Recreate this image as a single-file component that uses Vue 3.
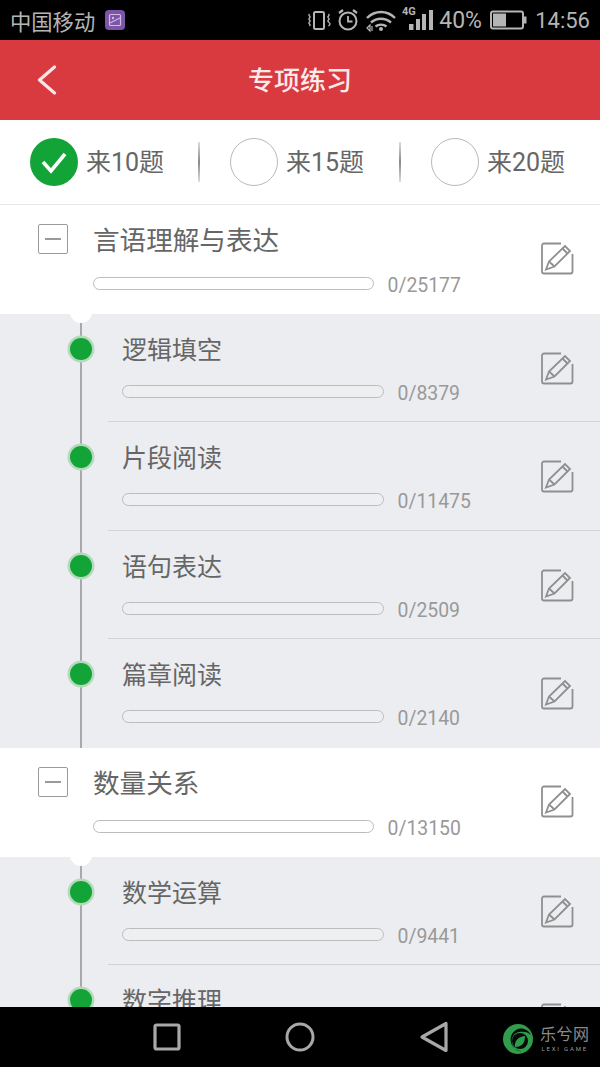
<script setup>
const options = [
  { label: '来10题', checked: true },
  { label: '来15题', checked: false },
  { label: '来20题', checked: false }
]
const sections = [
  {
    title: '言语理解与表达', bar: '0/25177',
    children: [
      { title: '逻辑填空', count: '0/8379' },
      { title: '片段阅读', count: '0/11475' },
      { title: '语句表达', count: '0/2509' },
      { title: '篇章阅读', count: '0/2140' }
    ]
  },
  {
    title: '数量关系', bar: '0/13150',
    children: [
      { title: '数学运算', count: '0/9441' },
      { title: '数字推理', count: '' }
    ]
  }
]
</script>

<template>
  <div class="page">
    <div class="status">
      <span class="carrier">中国移动</span>
      <svg class="gallery" width="20" height="20" viewBox="0 0 20 20">
        <rect width="20" height="20" rx="4" fill="#7d55a8" />
        <rect x="4.5" y="4.5" width="11" height="11" rx="1" fill="none" stroke="#cdbbe0" stroke-width="1.2" />
        <path d="M5 13l10-5" stroke="#cdbbe0" stroke-width="1.1" />
        <circle cx="8" cy="8" r="1.2" fill="#cdbbe0" />
      </svg>
      <span class="spacer"></span>
      <svg class="sys" width="132" height="40" viewBox="0 0 132 40" fill="none" stroke="#b5b5b5">
        <rect x="11" y="12" width="10" height="17" rx="1.5" stroke-width="2" />
        <path d="M6.500 14c-2 1.500 2 2.500 0 4s2 2.500 0 4s2 2.500 0 4M25.500 14c2 1.500-2 2.500 0 4s-2 2.500 0 4s2 2.500 0 4" stroke-width="1.400" />
        <circle cx="45" cy="21" r="8.500" stroke-width="2" />
        <path d="M45 16v5.500h4.500" stroke-width="1.800" />
        <path d="M36 13l4-3M54 13l-4-3" stroke-width="2.200" />
        <path d="M64 18c8-8 20-8 28 0M68 22.500c6-5 14-5 20 0M72.500 26.500c3-2.500 8-2.500 11 0" stroke-width="2.400" />
        <circle cx="78" cy="29" r="2" fill="#b5b5b5" stroke="none" />
        <path d="M64 28l3-3v6zM69 26v5" stroke-width="1.200" />
        <g stroke="none" fill="#b5b5b5">
          <rect x="106" y="24" width="4.500" height="6" />
          <rect x="113" y="19" width="4" height="11" />
          <rect x="119" y="14" width="4" height="16" />
          <rect x="126" y="10" width="4" height="20" />
        </g>
        <text x="99" y="15" class="tiny" stroke="none" fill="#b5b5b5">4G</text>
      </svg>
      <span class="pct">40%</span>
      <svg class="batt" width="37" height="20" viewBox="0 0 37 20">
        <rect x="1" y="1.500" width="32" height="17" rx="2" fill="none" stroke="#b5b5b5" stroke-width="2" />
        <rect x="3" y="3.500" width="13" height="13" fill="#b5b5b5" />
        <rect x="34" y="6.500" width="2.500" height="7" fill="#b5b5b5" />
      </svg>
      <span class="time">14:56</span>
    </div>

    <header class="head">
      <svg class="back" width="20" height="30" viewBox="0 0 20 30" fill="none" stroke="#f8e4e4" stroke-width="3.200" stroke-linecap="round" stroke-linejoin="round">
        <path d="M17.500 2L2.500 15l15 13" />
      </svg>
      <h1>专项练习</h1>
    </header>

    <div class="choices">
      <div v-for="o in options" :key="o.label" class="choice">
        <span class="radio" :class="{ on: o.checked }">
          <svg v-if="o.checked" width="48" height="48" viewBox="0 0 48 48" fill="none" stroke="#fff" stroke-width="3.600">
            <path d="M13 24l8 9L35 16" />
          </svg>
        </span>
        <span class="choice-label">{{ o.label }}</span>
      </div>
    </div>

    <div class="list">
      <section v-for="s in sections" :key="s.title">
        <div class="parent">
          <span class="minus"><i></i></span>
          <div class="info">
            <div class="title">{{ s.title }}</div>
            <div class="prog">
              <span class="bar bar-parent"></span>
              <span class="count">{{ s.bar }}</span>
            </div>
          </div>
          <svg class="edit" width="33" height="33" viewBox="0 0 33 33" fill="none" stroke="#8f8f8f" stroke-width="1.800">
            <path d="M20 1.500H3a2 2 0 0 0-2 2V29.500a2 2 0 0 0 2 2H29.500a2 2 0 0 0 2-2V12" />
            <path d="M5 27.500l3-8L24 4l5 5L13.500 24.500z" fill="#fff" />
            <path d="M8 19.500l5.500 5M21.500 6.500l5 5" />
          </svg>
        </div>
        <div class="kids">
          <span class="notch"></span>
          <div v-for="(c, i) in s.children" :key="c.title" class="kid">
            <div class="rail"><span class="dot"></span></div>
            <div class="kid-body" :class="{ last: i === s.children.length - 1 }">
              <div class="info">
                <div class="title kid-title">{{ c.title }}</div>
                <div class="prog">
                  <span class="bar bar-kid"></span>
                  <span v-if="c.count" class="count">{{ c.count }}</span>
                </div>
              </div>
              <svg class="edit" width="33" height="33" viewBox="0 0 33 33" fill="none" stroke="#8f8f8f" stroke-width="1.800">
                <path d="M20 1.500H3a2 2 0 0 0-2 2V29.500a2 2 0 0 0 2 2H29.500a2 2 0 0 0 2-2V12" />
                <path d="M5 27.500l3-8L24 4l5 5L13.500 24.500z" fill="#ecedf0" />
                <path d="M8 19.500l5.500 5M21.500 6.500l5 5" />
              </svg>
            </div>
          </div>
        </div>
      </section>
    </div>

    <nav class="nav">
      <span class="nav-btn">
        <svg width="28" height="28" viewBox="0 0 28 28" fill="none" stroke="#a8a8a8" stroke-width="3.200"><rect x="2" y="2" width="24" height="24" rx="1.500" /></svg>
      </span>
      <span class="nav-btn">
        <svg width="30" height="30" viewBox="0 0 30 30" fill="none" stroke="#a8a8a8" stroke-width="3"><circle cx="15" cy="15" r="13" /></svg>
      </span>
      <span class="nav-btn">
        <svg width="30" height="32" viewBox="0 0 30 32" fill="none" stroke="#a8a8a8" stroke-width="3.200" stroke-linejoin="round"><path d="M27 2.500V29.500L3 16z" /></svg>
      </span>
      <div class="logo">
        <svg width="32" height="32" viewBox="0 0 32 32">
          <circle cx="16" cy="16" r="15" fill="#2f9e4c" />
          <path d="M29 12c-3-6-10-8-15-5C9 10 7 16 10 22c2 4 6 6 10 6-5 1-9-3-10-8-1-6 2-10 7-11 5-1 9 0 12 3z" fill="#0a0a0a" />
          <circle cx="18" cy="18" r="8" fill="#0a0a0a" />
          <path d="M13 24c-1-6 3-10 10-11 0 7-3 11-10 11z" fill="#2f9e4c" />
        </svg>
        <div class="logo-text">
          <span class="logo-cn">乐兮网</span>
          <span class="logo-en">LEXI GAME</span>
        </div>
      </div>
    </nav>
  </div>
</template>

<style scoped>
.page {
  width: 600px;
  height: 1067px;
  display: flex;
  flex-direction: column;
  overflow: hidden;
  background: #fff;
  font-family: "Roboto", "Noto Sans CJK SC", sans-serif;
}
.status {
  height: 40px;
  flex: none;
  background: #000;
  display: flex;
  align-items: center;
  padding: 0 10px 0 10px;
  color: #b5b5b5;
}
.carrier { font-size: 21.300px; width: 95px; font-family: "Noto Sans CJK SC", sans-serif; white-space: nowrap; }
.spacer { flex: 1; }
.sys { flex: none; margin-right: 4px; }
.tiny { font: 700 11px "Roboto", sans-serif; }
.pct { font-size: 23px; width: 51px; }
.batt { flex: none; margin-right: 8px; }
.time { font-size: 22px; }
.head {
  height: 80px;
  flex: none;
  background: #d93a40;
  display: flex;
  align-items: center;
  justify-content: center;
  position: relative;
}
.head h1 {
  margin: 0 0 4px;
  color: #fbeaea;
  font: 500 26px "Noto Sans CJK SC", sans-serif;
}
.back { position: absolute; left: 37px; top: 25px; }
.choices {
  height: 84px;
  flex: none;
  display: grid;
  grid-template-columns: 200px 200px 200px;
  align-items: center;
  border-bottom: 1px solid #e6e6e6;
}
.choice {
  display: flex;
  align-items: center;
  gap: 8px;
  height: 40px;
  padding-left: 30px;
  position: relative;
}
.choice:last-child { padding-left: 31px; }
.choice + .choice::before {
  content: "";
  position: absolute;
  left: -2px;
  top: 0;
  width: 1.500px;
  height: 40px;
  background: linear-gradient(#ddd, #8a8a8a 50%, #ddd);
}
.choice:last-child::before { left: -1px; }
.radio {
  width: 48px;
  height: 48px;
  box-sizing: border-box;
  border-radius: 50%;
  border: 1px solid #b9b9b9;
  flex: none;
  margin: -4px 0;
}
.radio.on { background: #12a436; border: none; }
.radio svg { display: block; }
.choice-label { font-size: 25px; color: #666; white-space: nowrap; padding-bottom: 4px; }
.list { flex: 1; overflow: hidden; min-height: 0; }
.parent {
  height: 109px;
  display: flex;
  box-sizing: border-box;
  padding: 17px 26px 0 38px;
  background: #fff;
  position: relative;
}
.minus {
  width: 30px;
  height: 30px;
  box-sizing: border-box;
  border: 1.500px solid #9a9a9a;
  border-radius: 2px;
  flex: none;
  margin: 2px 25px 0 0;
  display: flex;
  align-items: center;
  justify-content: center;
}
.minus i { display: block; width: 16px; height: 2px; background: #9a9a9a; }
.info { flex: 1; min-width: 0; }
.title {
  font: 400 26.600px/34px "Noto Sans CJK SC", sans-serif;
  color: #666;
  white-space: nowrap;
}
.kid-title { font-size: 25px; }
.prog {
  display: flex;
  align-items: center;
  gap: 13.500px;
  margin-top: 21px;
  height: 13px;
}
.kid-body .prog { margin-top: 20px; }
.bar {
  box-sizing: border-box;
  height: 13px;
  border: 1.500px solid #bcbcbf;
  border-radius: 7px;
  flex: none;
}
.bar-parent { width: 281px; background: #fff; }
.bar-kid { width: 262px; background: #eeeff1; }
.count { font-size: 19.400px; color: #999; white-space: nowrap; padding-top: 4px; }
.edit { flex: none; margin-top: 20px; }
.kids { background: #ecedf0; position: relative; }
.notch {
  position: absolute;
  left: 70px;
  top: -3px;
  width: 22px;
  height: 12px;
  background: #fff;
  border-radius: 0 0 11px 11px;
  z-index: 1;
}
.kid { height: 108.400px; display: flex; }
.rail { width: 108px; flex: none; position: relative; }
.rail::before {
  content: "";
  position: absolute;
  left: 80px;
  top: 0;
  bottom: 0;
  width: 2px;
  background: #a9a9ab;
}
.dot {
  position: absolute;
  left: 70px;
  top: 24px;
  width: 22px;
  height: 22px;
  border-radius: 50%;
  background: #12a436;
  box-shadow: 0 0 0 2.500px #b5d9bd;
}
.kid-body {
  flex: 1;
  display: flex;
  box-sizing: border-box;
  padding: 17px 26px 0 14px;
  border-bottom: 1.500px solid #d2d2d5;
}
.kid-body.last { border-bottom: none; }
.kid-body .edit { margin-top: 21px; }
.nav {
  height: 60px;
  flex: none;
  background: #000;
  position: relative;
  display: flex;
  align-items: center;
}
.nav-btn {
  position: absolute;
  top: 0;
  height: 60px;
  display: flex;
  align-items: center;
}
.nav-btn:nth-child(1) { left: 153px; }
.nav-btn:nth-child(2) { left: 285px; }
.nav-btn:nth-child(3) { left: 419px; }
.nav svg { display: block; }
.logo {
  position: absolute;
  left: 502px;
  top: 16px;
  display: flex;
  gap: 6px;
}
.logo-text { display: flex; flex-direction: column; align-items: center; }
.logo-cn {
  font: 400 16px/20px "Noto Sans CJK SC", sans-serif;
  color: #8a8a8a;
  letter-spacing: 0.500px;
}
.logo-en {
  font: 400 6px/9px "Roboto", sans-serif;
  color: #999;
  letter-spacing: 1.800px;
  margin-top: 1px;
  white-space: nowrap;
}
</style>
